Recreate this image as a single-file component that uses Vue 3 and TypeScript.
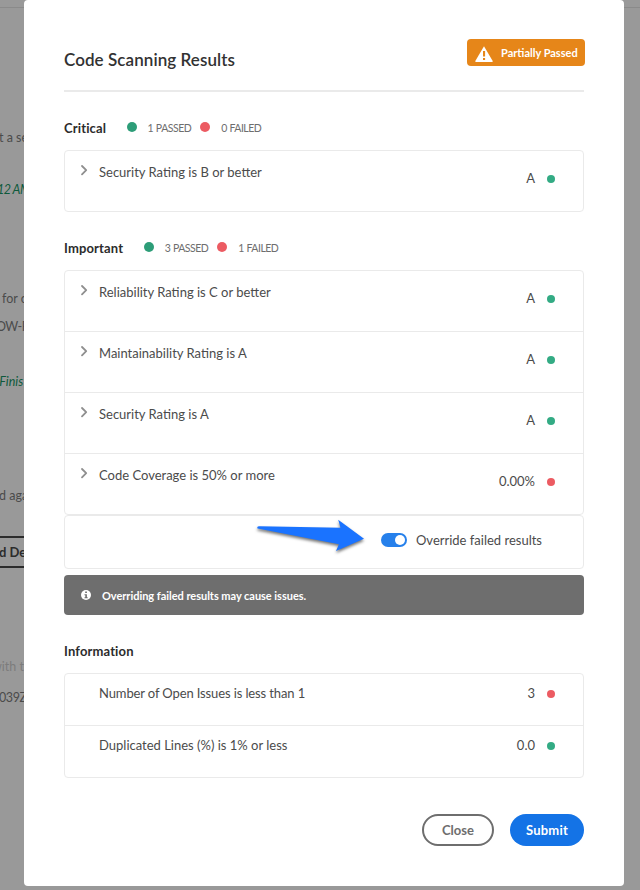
<script setup lang="ts">
import { ref } from 'vue'

interface Check {
  label: string
  value: string
  passed: boolean
}

interface Group {
  title: string
  passed: number
  failed: number
  checks: Check[]
}

const groups: Group[] = [
  {
    title: 'Critical',
    passed: 1,
    failed: 0,
    checks: [{ label: 'Security Rating is B or better', value: 'A', passed: true }],
  },
  {
    title: 'Important',
    passed: 3,
    failed: 1,
    checks: [
      { label: 'Reliability Rating is C or better', value: 'A', passed: true },
      { label: 'Maintainability Rating is A', value: 'A', passed: true },
      { label: 'Security Rating is A', value: 'A', passed: true },
      { label: 'Code Coverage is 50% or more', value: '0.00%', passed: false },
    ],
  },
]

const information: Check[] = [
  { label: 'Number of Open Issues is less than 1', value: '3', passed: false },
  { label: 'Duplicated Lines (%) is 1% or less', value: '0.0', passed: true },
]

const override = ref(true)
</script>

<template>
  <div class="page">
    <div class="backdrop">
      <div class="rule"></div>
      <p class="line first">t a se</p>
      <p class="line green ampm">12 AM</p>
      <p class="line for">for c</p>
      <p class="line flow">OW-R</p>
      <p class="line green finished">(Finis</p>
      <p class="line again">d aga</p>
      <div class="outlined">d De</div>
      <p class="line faint">with t</p>
      <p class="line stamp">039Z</p>
    </div>

    <main class="modal">
      <header class="head">
        <h1>Code Scanning Results</h1>
        <span class="badge">
          <svg width="18" height="16" viewBox="0 0 18 16">
            <path d="M9 0.2 17.7 15.1Q18 16 17 16H1Q0 16 0.3 15.1Z" fill="#fff" />
            <path d="M8 5h2.1v5.6H8zM8 12h2.1v2H8z" fill="#e68619" />
          </svg>
          Partially Passed
        </span>
      </header>

      <section v-for="g in groups" :key="g.title" class="group">
        <div class="group-head">
          <h2>{{ g.title }}</h2>
          <i class="dot big ok"></i>
          <span class="count">{{ g.passed }} PASSED</span>
          <i class="dot big bad"></i>
          <span class="count">{{ g.failed }} FAILED</span>
        </div>
        <ul class="card">
          <li v-for="c in g.checks" :key="c.label" class="row">
            <svg class="chevron" width="8" height="12" viewBox="0 0 8 12">
              <path d="M2 2 6.200 6.200 2 10.400" fill="none" stroke="#8e8e8e" stroke-width="1.8" stroke-linecap="round" stroke-linejoin="round" />
            </svg>
            <span class="label">{{ c.label }}</span>
            <span class="value">{{ c.value }}</span>
            <i class="dot" :class="c.passed ? 'ok' : 'bad'"></i>
          </li>
        </ul>
      </section>

      <div class="override">
        <svg class="arrow" width="116" height="44" viewBox="0 0 116 44">
          <path d="M5.500 10.600Q4.500 8.200 7.500 8.200L88.500 9.800 86.200 1.800 112 20.700 84 33 87 26.300Z" fill="#1a73ff" />
        </svg>
        <button class="toggle" :class="{ on: override }" type="button" role="switch" :aria-checked="override" @click="override = !override">
          <span class="knob"></span>
        </button>
        <span class="override-label">Override failed results</span>
      </div>

      <div class="notice">
        <svg width="10" height="10" viewBox="0 0 10 10">
          <circle cx="5" cy="5" r="5" fill="#fff" />
          <path d="M4.200 1.600h1.700v1.500H4.200zM3.500 4.200h2.400v3.100h.8v1H3.500v-1h.8V5.200h-.8z" fill="#6e6e6e" />
        </svg>
        <span>Overriding failed results may cause issues.</span>
      </div>

      <section class="info">
        <h2>Information</h2>
        <ul class="card">
          <li v-for="c in information" :key="c.label" class="row short">
            <span class="label">{{ c.label }}</span>
            <span class="value">{{ c.value }}</span>
            <i class="dot" :class="c.passed ? 'ok' : 'bad'"></i>
          </li>
        </ul>
      </section>

      <footer class="actions">
        <button type="button" class="btn outline">Close</button>
        <button type="button" class="btn primary">Submit</button>
      </footer>
    </main>
  </div>
</template>

<style>
body {
  background: #999;
}
</style>

<style scoped>
* {
  box-sizing: border-box;
}
.page {
  display: grid;
  height: 890px;
  overflow: hidden;
  background: #999;
  font-family: Lato, 'Open Sans', sans-serif;
  font-size: 13px;
  line-height: 18px;
  color: #4b4b4b;
}
.backdrop,
.modal {
  grid-area: 1 / 1;
}
.backdrop {
  padding-top: 7px;
}
.rule {
  height: 1px;
  background: #8a8a8a;
}
.line {
  margin: 0;
  font-size: 12.5px;
  white-space: nowrap;
}
.first {
  margin: 121px 0 0 -1px;
}
.green {
  font-style: italic;
  color: #0e5a3c;
}
.ampm {
  margin: 34px 0 0 -3px;
  letter-spacing: -0.5px;
}
.for {
  margin: 91px 0 0 2px;
}
.flow {
  margin: 10px 0 0 -4px;
  letter-spacing: -0.5px;
}
.finished {
  margin: 37px 0 0 -4px;
}
.again {
  margin: 96px 0 0 -1px;
}
.outlined {
  width: 60px;
  height: 32px;
  margin: 31px 0 0 -1px;
  border: solid #2c2c2c;
  border-width: 2px 0;
  font-weight: 700;
  font-size: 13px;
  line-height: 28px;
  color: #2c2c2c;
}
.faint {
  margin: 90px 0 0 -8px;
  color: #7c7c7c;
}
.stamp {
  margin: 13px 0 0 -1px;
  letter-spacing: -0.4px;
}
.modal {
  width: 600px;
  height: 886px;
  margin-left: 24px;
  padding: 0 40px;
  border-radius: 4px;
  background: #fff;
}
.head {
  display: flex;
  justify-content: space-between;
  height: 92px;
  padding-top: 39px;
  border-bottom: 2px solid #eaeaea;
}
h1 {
  margin: 10px 0 0;
  font-size: 17px;
  font-weight: 600;
  letter-spacing: 0.07px;
  line-height: 22px;
  color: #323232;
}
.badge {
  display: flex;
  align-items: center;
  gap: 8px;
  width: 118px;
  height: 27px;
  margin-right: -1px;
  padding-left: 8px;
  border-radius: 4px;
  background: #e68619;
  color: #fff;
  font-size: 11px;
  font-weight: 700;
  white-space: nowrap;
}
.badge svg {
  margin-top: 2px;
}
h2 {
  margin: 0;
  font-size: 13px;
  font-weight: 700;
  letter-spacing: 0.14px;
  line-height: 18px;
  color: #2c2c2c;
}
.group-head {
  display: flex;
  align-items: center;
  height: 58px;
  padding-top: 14px;
}
.dot {
  flex: none;
  width: 8px;
  height: 8px;
  border-radius: 50%;
}
.dot.ok {
  background: #33ab84;
}
.dot.bad {
  background: #ec5b62;
}
.dot.big {
  width: 10px;
  height: 10px;
  margin-top: -2px;
}
.dot.big.ok {
  margin-left: 20.5px;
  background: #2d9d78;
}
.dot.big.bad {
  margin-left: 9px;
}
.count {
  margin: -1px 0 0 11px;
  font-size: 10.5px;
  letter-spacing: -0.5px;
  word-spacing: 0.5px;
  color: #6e6e6e;
}
.card {
  margin: 0;
  padding: 0;
  list-style: none;
  border: 1px solid #eaeaea;
  border-radius: 4px;
}
.row {
  display: flex;
  align-items: flex-start;
  height: 60px;
  padding: 13px 28px 0 15px;
}
.row + .row {
  height: 61px;
  border-top: 1px solid #eaeaea;
}
.chevron {
  flex: none;
}
.label {
  flex: 1;
  margin: -1px 0 0 11px;
}
.value {
  margin-top: 5px;
}
.row .dot {
  margin: 11px 0 0 12px;
}
.row.short {
  height: 51px;
  padding-top: 11px;
}
.row.short + .row.short {
  height: 52px;
}
.short .label {
  margin-left: 19px;
}
.short:first-child .label {
  letter-spacing: -0.12px;
}
.short .value {
  margin-top: -1px;
}
.row.short .dot {
  margin-top: 5px;
}
.override {
  display: flex;
  align-items: center;
  justify-content: flex-end;
  height: 54px;
  padding: 0 41px 4px 0;
  border: 1px solid #eaeaea;
  border-radius: 4px;
}
.arrow {
  margin: 0 13px 0 0;
  filter: drop-shadow(0 2px 1.5px rgba(0, 0, 0, 0.55));
}
.toggle {
  display: flex;
  justify-content: flex-start;
  width: 26px;
  height: 14px;
  padding: 2px;
  border: 0;
  border-radius: 7px;
  background: #6e6e6e;
}
.toggle.on {
  justify-content: flex-end;
  background: #2680eb;
}
.knob {
  width: 10px;
  height: 10px;
  border-radius: 50%;
  background: #fff;
}
.override-label {
  margin-left: 9px;
}
.notice {
  display: flex;
  align-items: center;
  gap: 11px;
  height: 40px;
  margin-top: 6px;
  padding-left: 17px;
  border-radius: 4px;
  background: #6e6e6e;
  color: #fff;
  font-size: 11px;
  font-weight: 700;
}
.notice span {
  padding-top: 2px;
  letter-spacing: -0.03px;
}
.info h2 {
  padding-top: 27px;
  margin-bottom: 13px;
}
.actions {
  display: flex;
  justify-content: flex-end;
  gap: 16px;
  margin-top: 36px;
}
.btn {
  height: 32px;
  padding: 0 0 1px;
  border: 0;
  border-radius: 16px;
  font-family: inherit;
  font-size: 13px;
  font-weight: 700;
}
.outline {
  width: 72px;
  border: 2px solid #6e6e6e;
  background: #fff;
  color: #6e6e6e;
}
.primary {
  width: 74px;
  background: #1473e6;
  color: #fff;
  letter-spacing: 0.2px;
}
</style>
